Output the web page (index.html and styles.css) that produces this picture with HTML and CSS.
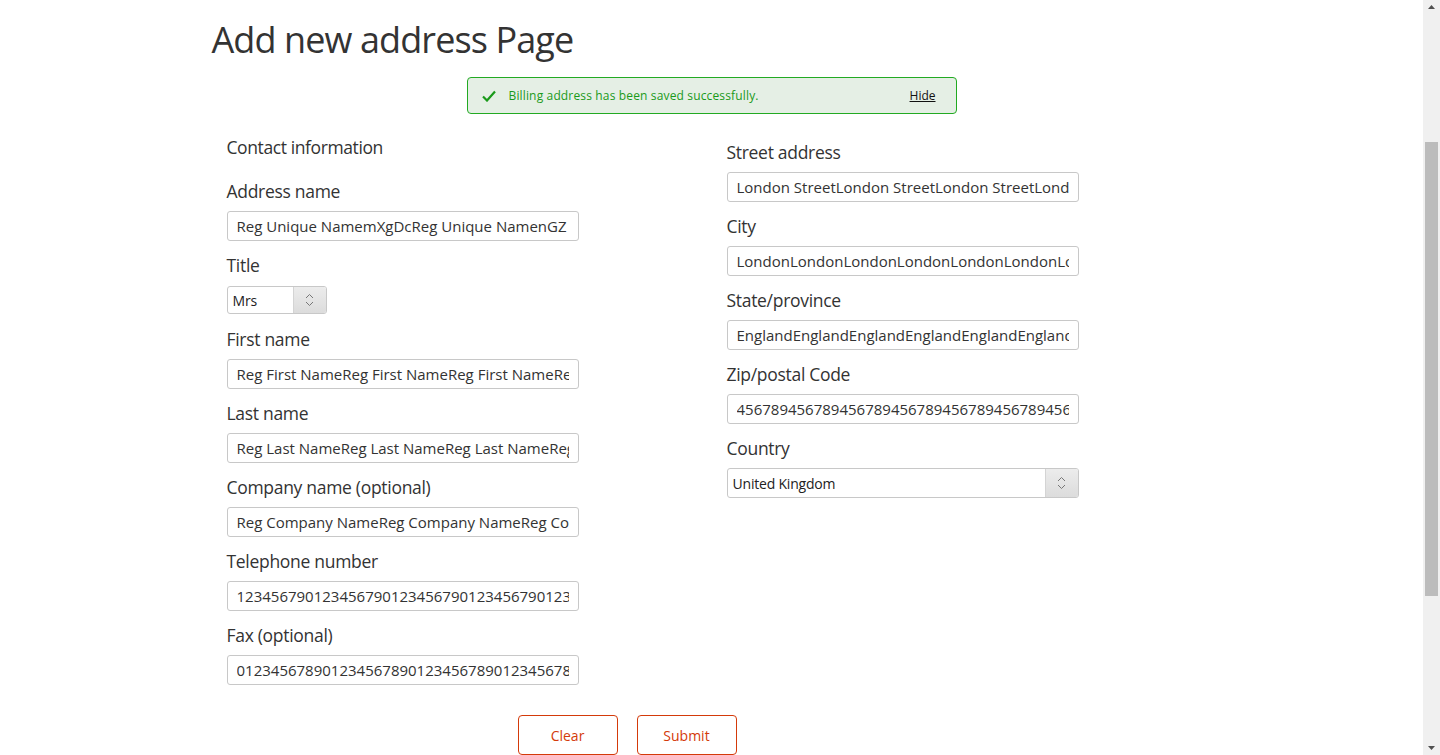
FILE: index.html
```html
<!DOCTYPE html>
<html>
<head>
<meta charset="utf-8">
<link rel="stylesheet" href="styles.css">
</head>
<body>
<div class="page">
  <div class="container">
    <h1 class="title">Add new address Page</h1>
    <div class="notice">
      <svg class="check" width="14" height="12" viewBox="0 0 14 12"><path d="M1 6.5 L5 10.5 L13 1.5" fill="none" stroke="#1a9a1a" stroke-width="2.2"/></svg>
      <span class="notice-text">Billing address has been saved successfully.</span>
      <a class="hide">Hide</a>
    </div>
    <div class="form">
      <div class="col">
        <div class="section">Contact information</div>
        <div class="field"><label>Address name</label><div class="input"><span class="val">Reg Unique NamemXgDcReg Unique NamenGZ<span class="caret"></span></span></div></div>
        <div class="field"><label>Title</label>
          <div class="select small"><span class="sel-text">Mrs</span><span class="sel-btn"><svg width="9" height="14" viewBox="0 0 9 14"><path d="M1 5 L4.5 1.5 L8 5 M1 9 L4.5 12.5 L8 9" fill="none" stroke="#777" stroke-width="1"/></svg></span></div>
        </div>
        <div class="field"><label>First name</label><div class="input"><span class="val">Reg First NameReg First NameReg First NameReg</span></div></div>
        <div class="field"><label>Last name</label><div class="input"><span class="val">Reg Last NameReg Last NameReg Last NameReg</span></div></div>
        <div class="field"><label>Company name (optional)</label><div class="input"><span class="val">Reg Company NameReg Company NameReg Company</span></div></div>
        <div class="field"><label>Telephone number</label><div class="input"><span class="val">1234567901234567901234567901234567901234</span></div></div>
        <div class="field"><label>Fax (optional)</label><div class="input"><span class="val">0123456789012345678901234567890123456789</span></div></div>
      </div>
      <div class="col right">
        <div class="field"><label>Street address</label><div class="input"><span class="val">London StreetLondon StreetLondon StreetLondon</span></div></div>
        <div class="field"><label>City</label><div class="input"><span class="val">LondonLondonLondonLondonLondonLondonLondon</span></div></div>
        <div class="field"><label>State/province</label><div class="input"><span class="val">EnglandEnglandEnglandEnglandEnglandEngland</span></div></div>
        <div class="field"><label>Zip/postal Code</label><div class="input"><span class="val">4567894567894567894567894567894567894567</span></div></div>
        <div class="field"><label>Country</label>
          <div class="select wide"><span class="sel-text">United Kingdom</span><span class="sel-btn"><svg width="9" height="14" viewBox="0 0 9 14"><path d="M1 5 L4.5 1.5 L8 5 M1 9 L4.5 12.5 L8 9" fill="none" stroke="#777" stroke-width="1"/></svg></span></div>
        </div>
      </div>
    </div>
    <div class="buttons">
      <button class="btn">Clear</button>
      <button class="btn">Submit</button>
    </div>
  </div>
</div>
<div class="scrollbar">
  <svg class="arrow" width="7" height="4" viewBox="0 0 7 4"><path d="M0 4 L3.5 0 L7 4 Z" fill="#505050"/></svg>
  <div class="track"><div class="thumb"></div></div>
  <svg class="arrow" width="7" height="4" viewBox="0 0 7 4"><path d="M0 0 L3.5 4 L7 0 Z" fill="#505050"/></svg>
</div>
</body>
</html>
```
FILE: styles.css
```css
html, body {
  margin: 0;
  padding: 0;
  height: 755px;
  overflow: hidden;
  background: #fff;
}
body {
  display: flex;
  font-family: "Open Sans", "Noto Sans", sans-serif;
  color: #333;
}
.page {
  flex: 1;
  min-width: 0;
}
.container {
  width: 1000px;
  margin: 0 auto;
}
.title {
  margin: 0;
  padding-top: 17px;
  font-size: 36px;
  font-weight: 400;
  line-height: 46px;
  color: #333;
  letter-spacing: -0.9px;
}
.notice {
  height: 35px;
  margin: 14px auto 0;
  border: 1px solid #22aa22;
  border-radius: 4px;
  background: #e5efe5;
  display: flex;
  align-items: center;
  padding: 0 20px 0 14px;
  box-sizing: content-box;
  width: 454px;
  font-size: 12px;
}
.check {
  margin-right: 13px;
}
.notice-text {
  color: #1a9a1a;
  flex: 1;
  letter-spacing: 0.15px;
}
.hide {
  color: #111;
  text-decoration: underline;
}
.form {
  display: flex;
  padding-left: 15px;
  margin-top: 21px;
}
.col {
  width: 500px;
  flex-shrink: 0;
  display: flex;
  flex-direction: column;
}
.col.right {
  padding-top: 5px;
}
.section {
  font-size: 17.5px;
  line-height: 24px;
  margin-bottom: 20px;
  letter-spacing: -0.4px;
}
.field {
  display: flex;
  flex-direction: column;
  margin-bottom: 12px;
}
.field label {
  font-size: 17.5px;
  line-height: 24px;
  margin-bottom: 8px;
  letter-spacing: -0.3px;
}
.input {
  width: 352px;
  height: 30px;
  box-sizing: border-box;
  border: 1px solid #c8c8c8;
  border-radius: 3px;
  padding: 0 9px 0 9px;
  font-size: 15px;
  line-height: 28px;
  color: #333;
}
.val {
  display: block;
  white-space: nowrap;
  overflow: hidden;
}
.caret {
  display: inline-block;
  width: 1px;
  height: 15px;
  margin-left: 4px;
  vertical-align: -2px;
  background: #c06000;
}
.select {
  display: flex;
  box-sizing: border-box;
  border: 1px solid #c8c8c8;
  border-radius: 3px;
  overflow: hidden;
  font-size: 14px;
  color: #222;
}
.select.small {
  width: 100px;
  height: 28px;
  margin: 1px 0;
}
.select.wide {
  width: 352px;
  height: 30px;
}
.sel-text {
  flex: 1;
  padding-left: 5px;
  display: flex;
  align-items: center;
  letter-spacing: -0.2px;
}
.sel-btn {
  width: 32px;
  border-left: 1px solid #d4d4d4;
  background: linear-gradient(#ececec, #dcdcdc);
  display: flex;
  align-items: center;
  justify-content: center;
}
.buttons {
  display: flex;
  gap: 19px;
  padding-left: 306px;
  margin-top: 18px;
}
.btn {
  width: 100px;
  height: 40px;
  background: #fff;
  border: 1px solid #d43a0a;
  border-radius: 4px;
  color: #d43a0a;
  font-family: "Open Sans", "Noto Sans", sans-serif;
  font-size: 14px;
  padding: 0;
}
.scrollbar {
  width: 17px;
  background: #f0f0f0;
  display: flex;
  flex-direction: column;
  align-items: center;
}
.arrow {
  margin: 5px 0;
}
.track {
  flex: 1;
  width: 100%;
  display: flex;
  flex-direction: column;
  align-items: center;
  padding-top: 128px;
  box-sizing: border-box;
}
.thumb {
  width: 13px;
  height: 454px;
  background: #bcbcbc;
}
```
